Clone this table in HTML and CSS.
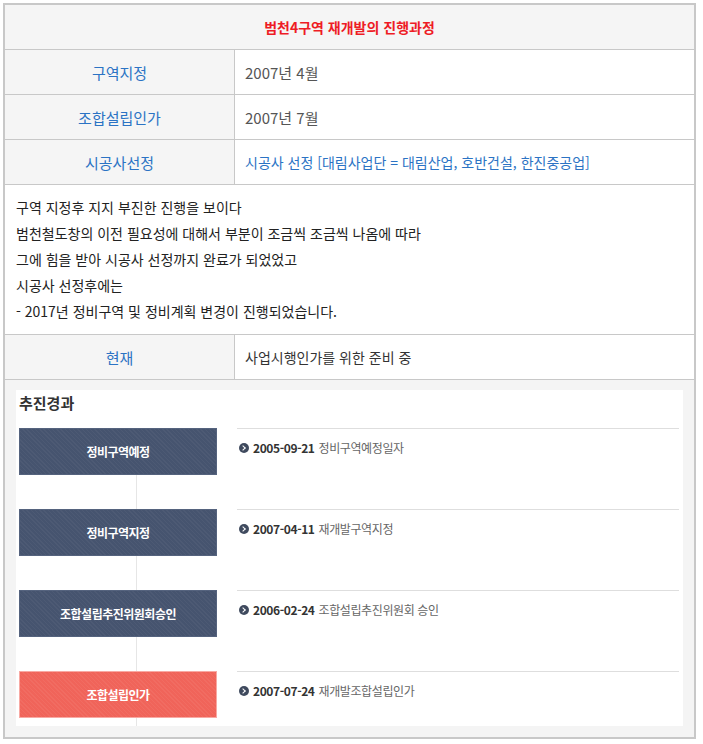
FILE: index.html
```html
<!DOCTYPE html>
<html lang="ko">
<head>
<meta charset="utf-8">
<link rel="stylesheet" href="styles.css">
</head>
<body>
<div class="wrap">
<table class="info">
  <tr><th colspan="2" class="title">범천4구역 재개발의 진행과정</th></tr>
  <tr><td class="label">구역지정</td><td class="value date">2007년 4월</td></tr>
  <tr><td class="label">조합설립인가</td><td class="value date">2007년 7월</td></tr>
  <tr><td class="label">시공사선정</td><td class="value blue">시공사 선정 [대림사업단 = 대림산업, 호반건설, 한진중공업]</td></tr>
  <tr><td colspan="2" class="desc">
    <p>구역 지정후 지지 부진한 진행을 보이다</p>
    <p>범천철도창의 이전 필요성에 대해서 부분이 조금씩 조금씩 나옴에 따라</p>
    <p>그에 힘을 받아 시공사 선정까지 완료가 되었었고</p>
    <p>시공사 선정후에는</p>
    <p>- 2017년 정비구역 및 정비계획 변경이 진행되었습니다.</p>
  </td></tr>
  <tr><td class="label">현재</td><td class="value dark">사업시행인가를 위한 준비 중</td></tr>
  <tr><td colspan="2" class="graphic-cell">
    <div class="graphic">
      <h3 class="g-title">추진경과</h3>
      <div class="timeline">
        <div class="step">
          <div class="box navy">정비구역예정</div>
          <div class="event"><span class="dot"></span><b>2005-09-21</b> 정비구역예정일자</div>
        </div>
        <div class="step">
          <div class="box navy">정비구역지정</div>
          <div class="event"><span class="dot"></span><b>2007-04-11</b> 재개발구역지정</div>
        </div>
        <div class="step">
          <div class="box navy">조합설립추진위원회승인</div>
          <div class="event"><span class="dot"></span><b>2006-02-24</b> 조합설립추진위원회 승인</div>
        </div>
        <div class="step">
          <div class="box red">조합설립인가</div>
          <div class="event"><span class="dot"></span><b>2007-07-24</b> 재개발조합설립인가</div>
        </div>
      </div>
    </div>
  </td></tr>
</table>
</div>
</body>
</html>
```
FILE: styles.css
```css
html, body {
  margin: 0;
  padding: 0;
  background: #fff;
}
body {
  font-family: "Noto Sans CJK KR", "Noto Sans", sans-serif;
  font-size: 14px;
  color: #222;
}
.wrap {
  padding: 3px;
}
.info {
  width: 693px;
  border-collapse: collapse;
  border: 2px solid #c8c8c8;
}
.info th, .info td {
  border: 1px solid #c8c8c8;
  padding: 0;
}
.title {
  height: 44px;
  background: #f5f5f5;
  color: #ee1c25;
  font-weight: bold;
  font-size: 14px;
  text-align: center;
}
.label {
  width: 229px;
  height: 44px;
  background: #f5f5f5;
  color: #2b73c4;
  font-size: 15px;
  text-align: center;
}
.value {
  padding-left: 10px !important;
  color: #555;
  font-size: 14px;
}
.value.date { font-size: 15px; }
.value.blue { color: #2b73c4; }
.value.dark { color: #333; }
.desc {
  padding: 9px 11px 10px !important;
  color: #222;
}
.desc p {
  margin: 0;
  line-height: 26px;
}
.graphic-cell {
  background: #f4f4f4;
  padding: 10px 11px 11px 11px !important;
}
.graphic {
  background: #fff;
  height: 336px;
  position: relative;
  overflow: hidden;
}
.g-title {
  margin: 0;
  padding: 2px 0 0 3px;
  height: 38px;
  box-sizing: border-box;
  font-size: 15px;
  font-weight: bold;
  color: #333;
  line-height: 22px;
}
.timeline {
  position: relative;
  display: flex;
  flex-direction: column;
  gap: 34px;
  padding-left: 3px;
}
.timeline::before {
  content: "";
  position: absolute;
  left: 120px;
  top: 0;
  height: 320px;
  width: 1px;
  background: #e6e6e6;
}
.step {
  position: relative;
  display: flex;
  align-items: flex-start;
  gap: 20px;
}
.box {
  width: 198px;
  height: 47px;
  box-sizing: border-box;
  display: flex;
  align-items: center;
  justify-content: center;
  color: #fff;
  font-weight: bold;
  font-size: 12px;
  letter-spacing: -0.5px;
}
.navy {
  background: #46546f repeating-linear-gradient(45deg, rgba(255,255,255,0.035) 0 1px, transparent 1px 3px);
  border: 1px solid #55637e;
}
.red {
  background: #f0645a repeating-linear-gradient(45deg, rgba(255,255,255,0.05) 0 1px, transparent 1px 3px);
  border: 1px solid #f8a9a3;
}
.event {
  flex: 1;
  margin-right: 4px;
  border-top: 1px solid #dedede;
  padding: 10px 0 0 2px;
  font-size: 12px;
  color: #666;
  letter-spacing: -0.4px;
  line-height: 18px;
  display: flex;
  align-items: center;
}
.event b {
  color: #333;
  font-weight: bold;
  margin-right: 4px;
}
.dot {
  width: 10px;
  height: 10px;
  border-radius: 50%;
  background: #3f4a5e;
  margin-right: 4px;
  position: relative;
  flex: none;
}
.dot::after {
  content: "";
  position: absolute;
  left: 2px;
  top: 3px;
  width: 3px;
  height: 3px;
  border-top: 1.3px solid #fff;
  border-right: 1.3px solid #fff;
  transform: rotate(45deg);
}
```
